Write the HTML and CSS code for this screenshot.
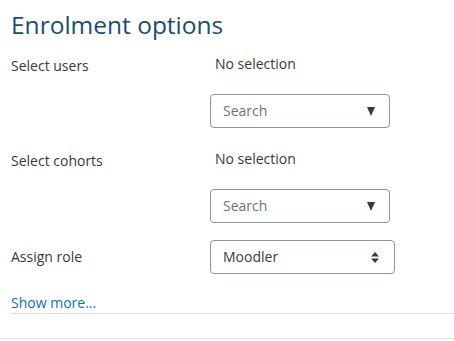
FILE: index.html
```html
<!DOCTYPE html>
<html lang="en">
<head>
  <meta charset="UTF-8">
  <title>Enrolment options</title>
  <link rel="stylesheet" href="styles.css">
</head>
<body>

<div class="page">
  <h3 class="title">Enrolment options</h3>

  <div class="form">
    <div class="row">
      <label class="label label-static">Select users</label>
      <div class="field">
        <div class="selection">No selection</div>
        <div class="search">
          <span>Search</span>
          <svg class="arrow" width="8" height="9" viewBox="0 0 8 9">
            <path d="M0 0 L8 0 L4 9 Z" fill="#3a3a3a"/>
          </svg>
        </div>
      </div>
    </div>

    <div class="row">
      <label class="label label-static">Select cohorts</label>
      <div class="field">
        <div class="selection">No selection</div>
        <div class="search">
          <span>Search</span>
          <svg class="arrow" width="8" height="9" viewBox="0 0 8 9">
            <path d="M0 0 L8 0 L4 9 Z" fill="#3a3a3a"/>
          </svg>
        </div>
      </div>
    </div>

    <div class="row row-last">
      <label class="label label-select">Assign role</label>
      <div class="field">
        <div class="select">
          <span>Moodler</span>
          <svg class="caret" width="8" height="11" viewBox="0 0 8 11">
            <path d="M4 0 L8 4.5 L0 4.5 Z M0 6.5 L8 6.5 L4 11 Z" fill="#373a3c"/>
          </svg>
        </div>
      </div>
    </div>
  </div>

  <div class="more-wrap">
    <a href="#" class="more">Show more...</a>
  </div>
</div>

<div class="footer-line"></div>

</body>
</html>
```

FILE: styles.css
```css
* { margin: 0; padding: 0; box-sizing: border-box; }

html, body {
  font-family: 'Open Sans', sans-serif;
  font-size: 14px;
  color: #373a3c;
  background: #fff;
  overflow: hidden;
}

.page {
  padding: 10px 0 0 11px;
}

.title {
  font-size: 24.5px;
  font-weight: 400;
  line-height: 30px;
  color: #1b4d6e;
  margin-bottom: 14px;
}

.form {
  display: flex;
  flex-direction: column;
  gap: 21px;
}

.row {
  display: grid;
  grid-template-columns: 199px auto;
  align-items: start;
}

.row-last {
  margin-top: -4px;
}

.label {
  line-height: 20px;
}

.label-static { padding-top: 2px; }
.label-select { padding-top: 7px; }

.field {
  display: flex;
  flex-direction: column;
  gap: 20px;
}

.selection {
  line-height: 20px;
  padding-left: 5px;
}

.search, .select {
  display: flex;
  align-items: center;
  justify-content: space-between;
  height: 34px;
  border: 1px solid #8f959e;
  border-radius: 4px;
  padding: 0 14px 0 12px;
  line-height: 20px;
}

.search {
  width: 180px;
  color: #6a737b;
}

.select {
  width: 185px;
  color: #373a3c;
  padding-right: 15px;
}

.more-wrap {
  margin-top: 18px;
  border-bottom: 1px solid #dee2e6;
  line-height: 21px;
}

.more {
  color: #0f6cbf;
  text-decoration: none;
}

.footer-line {
  margin-top: 24px;
  border-top: 1px solid #dee2e6;
}
```
